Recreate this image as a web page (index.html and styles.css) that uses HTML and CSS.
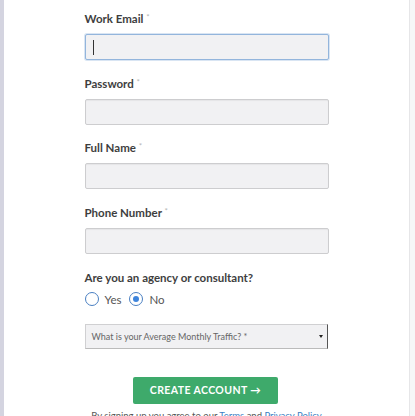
FILE: index.html
```html
<!DOCTYPE html>
<html>
<head>
<meta charset="utf-8">
<link rel="stylesheet" href="styles.css">
</head>
<body>
<div class="page">
  <main class="panel">
    <form class="form">
      <div class="group">
        <label class="label">Work Email <span class="req">*</span></label>
        <div class="input focus"><span class="caret"></span></div>
      </div>
      <div class="group">
        <label class="label">Password <span class="req">*</span></label>
        <div class="input"></div>
      </div>
      <div class="group">
        <label class="label">Full Name <span class="req">*</span></label>
        <div class="input"></div>
      </div>
      <div class="group">
        <label class="label">Phone Number <span class="req">*</span></label>
        <div class="input"></div>
      </div>
      <div class="question">
        <div class="label">Are you an agency or consultant?</div>
        <div class="radios">
          <span class="radio"></span><span class="rlabel">Yes</span>
          <span class="radio checked"></span><span class="rlabel">No</span>
        </div>
      </div>
      <div class="select">
        <span class="select-text">What is your Average Monthly Traffic? *</span>
        <span class="arrow"></span>
      </div>
      <div class="actions">
        <button type="button" class="btn">CREATE ACCOUNT →</button>
      </div>
      <p class="terms">By signing up you agree to our <a class="link">Terms</a> and <a class="link">Privacy Policy</a></p>
    </form>
  </main>
</div>
</body>
</html>
```
FILE: styles.css
```css
* { box-sizing: border-box; }
html, body { margin: 0; padding: 0; }
body {
  background: #f6f6f7;
  font-family: Lato, "Open Sans", sans-serif;
  height: 416px;
  overflow: hidden;
}
.page {
  display: flex;
  height: 416px;
}
.panel {
  width: 410px;
  background: #ffffff;
  border-left: 4px solid #d4d4e0;
  border-right: 1px solid #e6e6e8;
}
.form {
  width: 244px;
  margin: 0 auto;
  padding-top: 11px;
}
.group {
  margin-bottom: 15.5px;
}
.label {
  display: block;
  font-size: 11.5px;
  line-height: 15px;
  height: 15px;
  font-weight: 700;
  color: #3e3e3e;
  margin-bottom: 8px;
}
.req {
  color: #b5b5b5;
  font-weight: 400;
  font-size: 8px;
  line-height: 0;
  vertical-align: 3px;
}
.input {
  height: 26px;
  background: #f1f1f3;
  border: 1px solid #cdcdcf;
  border-radius: 2px;
  box-shadow: inset 0 1px 1px rgba(0,0,0,0.05);
  display: flex;
  align-items: center;
  padding-left: 7px;
}
.input.focus {
  border-color: #93b5dc;
  box-shadow: 0 0 0 1px rgba(147,181,220,0.35);
}
.caret {
  width: 1px;
  height: 15px;
  background: #333;
}
.question {
  padding-top: 1px;
}
.question .label {
  margin-bottom: 7px;
}
.radios {
  display: flex;
  align-items: center;
  height: 14px;
}
.radio {
  width: 14px;
  height: 14px;
  border-radius: 50%;
  border: 1px solid #4a80c2;
  background: #fff;
  display: flex;
  align-items: center;
  justify-content: center;
}
.radio.checked::after {
  content: "";
  width: 6px;
  height: 6px;
  border-radius: 50%;
  background: #3d84dc;
}
.rlabel {
  font-size: 11.5px;
  color: #555;
  margin-left: 6px;
  margin-right: 8px;
}
.select {
  margin-top: 18px;
  width: 243px;
  height: 25px;
  background: #f1f1f3;
  border: 1px solid #d0d0d2;
  border-right: 1px solid #555;
  border-bottom: 1px solid #bbb;
  display: flex;
  align-items: center;
  justify-content: space-between;
  padding: 0 4px 0 6px;
}
.select-text {
  font-size: 9px;
  color: #666;
}
.arrow {
  width: 0;
  height: 0;
  border-left: 2.5px solid transparent;
  border-right: 2.5px solid transparent;
  border-top: 3px solid #222;
}
.actions {
  display: flex;
  justify-content: center;
  margin-top: 27.5px;
}
.btn {
  width: 145px;
  height: 27px;
  background: #3eaa6b;
  border: none;
  border-radius: 2px;
  color: #fff;
  font-family: Lato, sans-serif;
  font-weight: 700;
  font-size: 10.5px;
  letter-spacing: 0.4px;
  padding: 0;
  margin-left: -2px;
}
.terms {
  margin: 6px 0 0;
  text-align: center;
  font-size: 9.5px;
  line-height: 12px;
  color: #555;
  white-space: nowrap;
}
.link {
  color: #3b7fc4;
}
```
